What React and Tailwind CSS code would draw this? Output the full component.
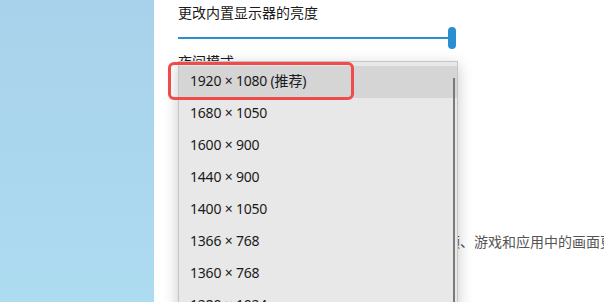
import React from "react";

const resolutions = [
  "1920 × 1080 (推荐)",
  "1680 × 1050",
  "1600 × 900",
  "1440 × 900",
  "1400 × 1050",
  "1366 × 768",
  "1360 × 768",
  "1280 × 1024",
];

const font = {
  fontFamily: '"Noto Sans", "Noto Sans CJK SC", sans-serif',
};

const App = () => {
  return (
    <div
      className="flex w-[604px] h-[302px] overflow-hidden bg-white"
      style={font}
    >
      {/* wallpaper strip */}
      <div className="w-[154px] h-full shrink-0 bg-gradient-to-b from-[#a8d2eb] to-[#addbf0]" />

      {/* settings page */}
      <div className="relative flex-1 h-full bg-white pl-[24px] overflow-hidden">
        <div className="pt-[3px] text-[14px] leading-[20px] text-[#1a1a1a]">
          更改内置显示器的亮度
        </div>

        {/* brightness slider */}
        <div className="mt-[4px] flex items-center h-[22px] w-[280px]">
          <div className="flex-1 h-[2px] bg-[#2a8fd0]" />
          <div className="w-[8px] h-[22px] rounded-full bg-[#2a8fd0] mr-[2px]" />
        </div>

        <div className="mt-[3px] text-[14px] leading-[20px] text-[#1a1a1a]">
          夜间模式
        </div>

        <div className="mt-[160px] text-[14px] leading-[20px] text-[#555] whitespace-nowrap pl-[254px]">
          视频、游戏和应用中的画面更亮、更生动
        </div>

        {/* resolution dropdown */}
        <div className="absolute left-[24px] top-[61px] w-[280px] h-[260px] bg-[#e8e8e8] border border-[#c6c6c6] shadow-[0_4px_14px_rgba(0,0,0,0.22)] pt-[4px]">
          {resolutions.map((r, i) => (
            <div
              key={r}
              className={`h-[32px] flex items-center pl-[11px] pb-[3px] text-[14px] tracking-[-0.2px] text-[#1a1a1a] ${
                i === 0 ? "bg-[#d5d5d5]" : ""
              }`}
            >
              {r}
            </div>
          ))}
          {/* scrollbar */}
          <div className="absolute right-[2px] top-[16px] bottom-0 w-[2px] bg-[#7a7a7a]" />
        </div>

        {/* red highlight */}
        <div className="absolute left-[14px] top-[62px] w-[186px] h-[38px] border-[3px] border-[#ef4b4b] rounded-[6px]" />
      </div>
    </div>
  );
};

export default App;
